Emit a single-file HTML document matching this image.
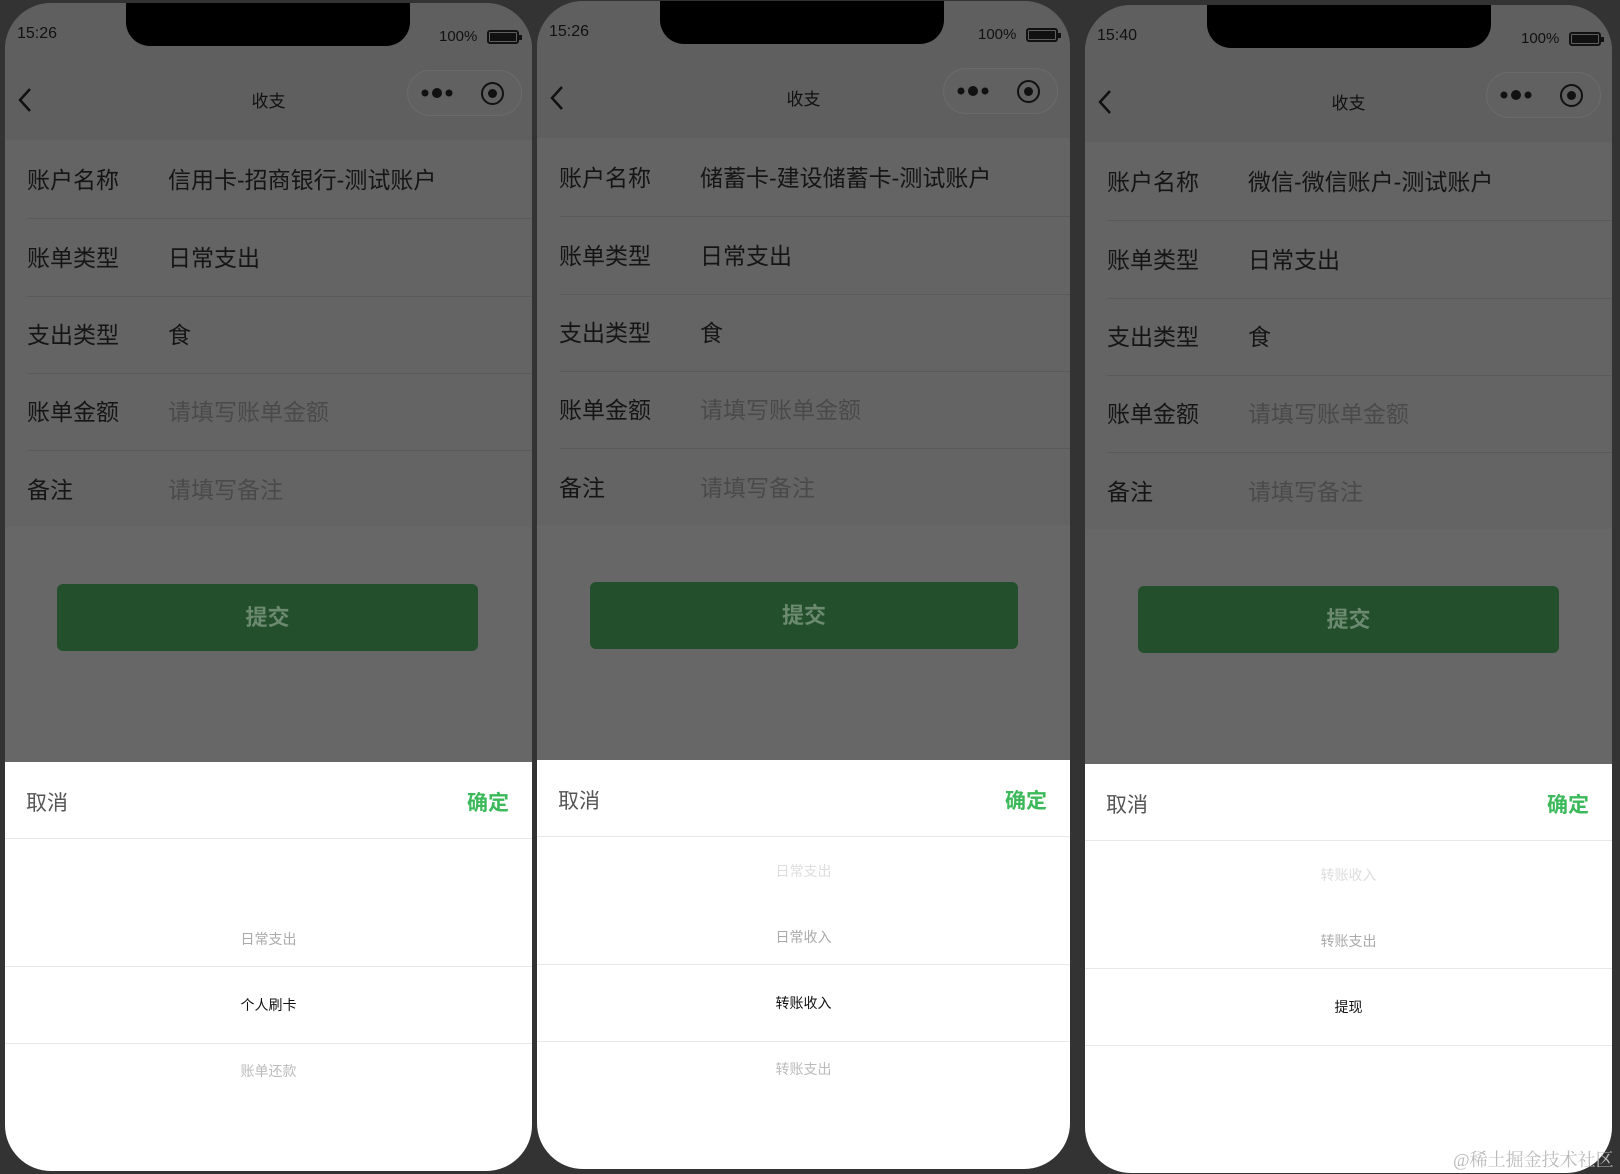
<!DOCTYPE html>
<html><head><meta charset="utf-8"><style>
*{margin:0;padding:0;box-sizing:border-box}
body{width:1620px;height:1174px;background:#333;position:relative;overflow:hidden;font-family:"Liberation Sans","Noto Sans CJK SC",sans-serif}
.ph{position:absolute;width:527px;height:1168px;border-radius:46px;overflow:hidden;background:#676767}
.a{position:absolute}
.nav{left:0;top:0;width:100%;height:137px;background:#5f5f5f}
.notch{left:121px;top:-3px;width:284px;height:46px;background:#000;border-radius:0 0 24px 24px}
.st{font-size:16px;color:#111}
.form{left:0;top:137px;width:100%;height:387px;background:#646464}
.row{position:absolute;left:0;width:100%;height:78px;font-size:23px;color:#151515}
.row .l{position:absolute;left:22px;top:50%;transform:translateY(-50%)}
.row .v{position:absolute;left:163px;top:50%;transform:translateY(-50%)}
.row .p{color:#4a4a4a}
.sep{position:absolute;left:22px;right:0;height:1px;background:#5a5a5a}
.btn{left:52px;top:581px;width:421px;height:67px;background:#244f2d;border-radius:6px;color:#6c8a70;font-size:22px;font-weight:bold;text-align:center;line-height:67px}
.sheet{left:0;top:759px;width:100%;height:420px;background:#fff}
.hd{font-size:21px}
.it{position:absolute;left:0;width:100%;text-align:center;font-size:14px}
.ln{position:absolute;left:0;width:100%;height:1px;background:#e8e8e8}
.cap{left:402px;top:67px;width:115px;height:46px;border:1px solid #6a6a6a;border-radius:23px;background:#616161}
</style></head><body>

<div class="ph" style="left:5px;top:3px">
 <div class="a nav"></div><div class="a notch"></div>
 <div class="a st" style="left:12px;top:22px">15:26</div>
 <div class="a st" style="left:434px;top:25px;font-size:15px">100%</div>
 <div class="a" style="left:482px;top:27px;width:32px;height:14px;border:2px solid #111;border-radius:3px;padding:1px"><div style="width:100%;height:100%;background:#111"></div></div>
 <div class="a" style="left:514px;top:32px;width:3px;height:5px;background:#111"></div>
 <svg class="a" style="left:12px;top:84px" width="16" height="26"><path d="M13 2L3 13L13 24" stroke="#111" stroke-width="2.5" fill="none"/></svg>
 <div class="a" style="left:0;width:100%;top:84px;text-align:center;font-size:17px;color:#111">收支</div>
 <div class="a cap"><svg style="position:absolute;left:12px;top:15px" width="36" height="14"><circle cx="5" cy="7" r="3.5" fill="#111"/><circle cx="17" cy="7" r="5" fill="#111"/><circle cx="29" cy="7" r="3.5" fill="#111"/></svg><div style="position:absolute;left:73px;top:11px;width:23px;height:23px;border:2.5px solid #111;border-radius:50%"><div style="position:absolute;left:4.5px;top:4.5px;width:9px;height:9px;background:#111;border-radius:50%"></div></div></div>
 <div class="a form"></div>
 <div class="row" style="top:136px"><span class="l">账户名称</span><span class="v">信用卡-招商银行-测试账户</span></div>
 <div class="sep" style="top:215px"></div>
 <div class="row" style="top:214px"><span class="l">账单类型</span><span class="v">日常支出</span></div>
 <div class="sep" style="top:293px"></div>
 <div class="row" style="top:291px"><span class="l">支出类型</span><span class="v">食</span></div>
 <div class="sep" style="top:370px"></div>
 <div class="row" style="top:368px"><span class="l">账单金额</span><span class="v p">请填写账单金额</span></div>
 <div class="sep" style="top:447px"></div>
 <div class="row" style="top:446px"><span class="l">备注</span><span class="v p">请填写备注</span></div>
 <div class="a btn">提交</div>
 <div class="a sheet">
  <div class="a hd" style="left:21px;top:25px;color:#555">取消</div>
  <div class="a hd" style="right:23px;top:25px;color:#3cb95a;font-weight:bold">确定</div>
  <div class="ln" style="top:76px"></div>
  <div class="ln" style="top:204px"></div><div class="ln" style="top:281px"></div>
  <div class="it" style="top:167px;color:#aaa">日常支出</div>
  <div class="it" style="top:233px;color:#111">个人刷卡</div>
  <div class="it" style="top:299px;color:#bbb">账单还款</div>
 </div>
</div>

<div class="ph" style="left:537px;top:1px;width:533px">
 <div class="a nav"></div><div class="a notch" style="left:123px"></div>
 <div class="a st" style="left:12px;top:22px">15:26</div>
 <div class="a st" style="left:441px;top:25px;font-size:15px">100%</div>
 <div class="a" style="left:489px;top:27px;width:32px;height:14px;border:2px solid #111;border-radius:3px;padding:1px"><div style="width:100%;height:100%;background:#111"></div></div>
 <div class="a" style="left:521px;top:32px;width:3px;height:5px;background:#111"></div>
 <svg class="a" style="left:12px;top:84px" width="16" height="26"><path d="M13 2L3 13L13 24" stroke="#111" stroke-width="2.5" fill="none"/></svg>
 <div class="a" style="left:0;width:100%;top:84px;text-align:center;font-size:17px;color:#111">收支</div>
 <div class="a cap" style="left:406px"><svg style="position:absolute;left:12px;top:15px" width="36" height="14"><circle cx="5" cy="7" r="3.5" fill="#111"/><circle cx="17" cy="7" r="5" fill="#111"/><circle cx="29" cy="7" r="3.5" fill="#111"/></svg><div style="position:absolute;left:73px;top:11px;width:23px;height:23px;border:2.5px solid #111;border-radius:50%"><div style="position:absolute;left:4.5px;top:4.5px;width:9px;height:9px;background:#111;border-radius:50%"></div></div></div>
 <div class="a form"></div>
 <div class="row" style="top:136px"><span class="l">账户名称</span><span class="v">储蓄卡-建设储蓄卡-测试账户</span></div>
 <div class="sep" style="top:215px"></div>
 <div class="row" style="top:214px"><span class="l">账单类型</span><span class="v">日常支出</span></div>
 <div class="sep" style="top:293px"></div>
 <div class="row" style="top:291px"><span class="l">支出类型</span><span class="v">食</span></div>
 <div class="sep" style="top:370px"></div>
 <div class="row" style="top:368px"><span class="l">账单金额</span><span class="v p">请填写账单金额</span></div>
 <div class="sep" style="top:447px"></div>
 <div class="row" style="top:446px"><span class="l">备注</span><span class="v p">请填写备注</span></div>
 <div class="a btn" style="left:53px;width:428px">提交</div>
 <div class="a sheet">
  <div class="a hd" style="left:21px;top:25px;color:#555">取消</div>
  <div class="a hd" style="right:23px;top:25px;color:#3cb95a;font-weight:bold">确定</div>
  <div class="ln" style="top:76px"></div>
  <div class="ln" style="top:204px"></div><div class="ln" style="top:281px"></div>
  <div class="it" style="top:101px;color:#ddd">日常支出</div>
  <div class="it" style="top:167px;color:#aaa">日常收入</div>
  <div class="it" style="top:233px;color:#111">转账收入</div>
  <div class="it" style="top:299px;color:#bbb">转账支出</div>
 </div>
</div>

<div class="ph" style="left:1085px;top:5px">
 <div class="a nav"></div><div class="a notch" style="left:122px"></div>
 <div class="a st" style="left:12px;top:22px">15:40</div>
 <div class="a st" style="left:436px;top:25px;font-size:15px">100%</div>
 <div class="a" style="left:484px;top:27px;width:32px;height:14px;border:2px solid #111;border-radius:3px;padding:1px"><div style="width:100%;height:100%;background:#111"></div></div>
 <div class="a" style="left:516px;top:32px;width:3px;height:5px;background:#111"></div>
 <svg class="a" style="left:12px;top:84px" width="16" height="26"><path d="M13 2L3 13L13 24" stroke="#111" stroke-width="2.5" fill="none"/></svg>
 <div class="a" style="left:0;width:100%;top:84px;text-align:center;font-size:17px;color:#111">收支</div>
 <div class="a cap" style="left:401px"><svg style="position:absolute;left:12px;top:15px" width="36" height="14"><circle cx="5" cy="7" r="3.5" fill="#111"/><circle cx="17" cy="7" r="5" fill="#111"/><circle cx="29" cy="7" r="3.5" fill="#111"/></svg><div style="position:absolute;left:73px;top:11px;width:23px;height:23px;border:2.5px solid #111;border-radius:50%"><div style="position:absolute;left:4.5px;top:4.5px;width:9px;height:9px;background:#111;border-radius:50%"></div></div></div>
 <div class="a form"></div>
 <div class="row" style="top:136px"><span class="l">账户名称</span><span class="v">微信-微信账户-测试账户</span></div>
 <div class="sep" style="top:215px"></div>
 <div class="row" style="top:214px"><span class="l">账单类型</span><span class="v">日常支出</span></div>
 <div class="sep" style="top:293px"></div>
 <div class="row" style="top:291px"><span class="l">支出类型</span><span class="v">食</span></div>
 <div class="sep" style="top:370px"></div>
 <div class="row" style="top:368px"><span class="l">账单金额</span><span class="v p">请填写账单金额</span></div>
 <div class="sep" style="top:447px"></div>
 <div class="row" style="top:446px"><span class="l">备注</span><span class="v p">请填写备注</span></div>
 <div class="a btn" style="left:53px">提交</div>
 <div class="a sheet">
  <div class="a hd" style="left:21px;top:25px;color:#555">取消</div>
  <div class="a hd" style="right:23px;top:25px;color:#3cb95a;font-weight:bold">确定</div>
  <div class="ln" style="top:76px"></div>
  <div class="ln" style="top:204px"></div><div class="ln" style="top:281px"></div>
  <div class="it" style="top:101px;color:#ddd">转账收入</div>
  <div class="it" style="top:167px;color:#aaa">转账支出</div>
  <div class="it" style="top:233px;color:#111">提现</div>
 </div>
</div>
<div class="a" style="left:1453px;top:1146px;font-size:18px;color:#bbb;font-family:'Liberation Serif','Noto Serif CJK SC',serif">@稀土掘金技术社区</div>
</body></html>
